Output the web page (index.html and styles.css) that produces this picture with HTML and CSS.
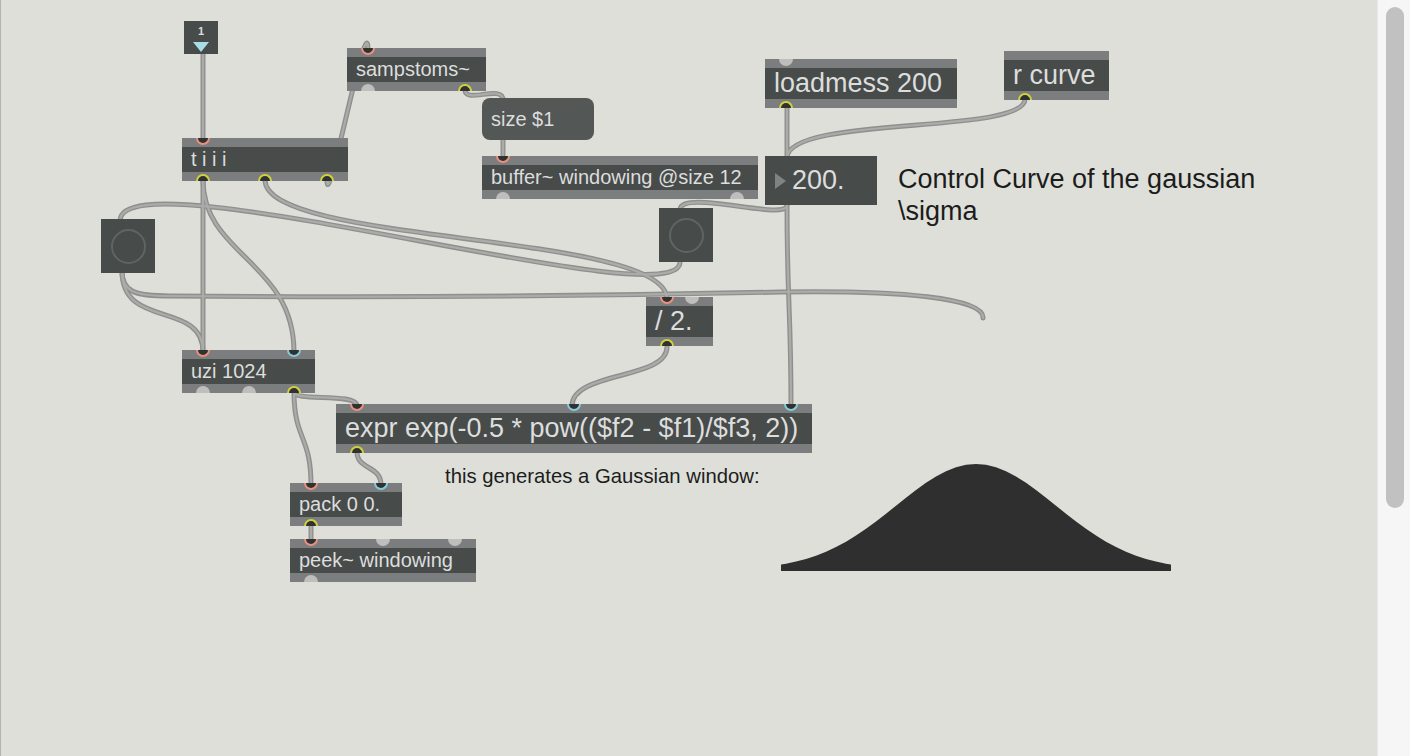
FILE: index.html
```html
<!DOCTYPE html>
<html lang="en">

<head>
    <meta charset="UTF-8">
    <title>gaussian window</title>
    <link rel="stylesheet" href="styles.css">
</head>

<body>
    <div class="patcher">

        <!-- patch cords, drawn under the boxes -->
        <svg class="cords" width="1377" height="756" viewBox="0 0 1377 756">
            <defs>
                <g id="cordset">
                    <path d="M203,54 L203,140" />
                    <path d="M327,180 C327,218 368,2 368,50" />
                    <path d="M465,90 C465,104 503,84 503,100" />
                    <path d="M503,140 L503,158" />
                    <path d="M787,107 L787,160" />
                    <path d="M787,205 C787,300 791,310 791,406" />
                    <path d="M1025,99 C1025,135 787,115 787,158" />
                    <path d="M787,205 C787,222 680,188 680,210" />
                    <path d="M680,262 C680,320 120,152 120,221" />
                    <path d="M265,180 C265,245 667,232 667,299" />
                    <path d="M667,347 C667,380 572,371 572,406" />
                    <path d="M203,180 L203,352" />
                    <path d="M203,180 C203,255 294,262 294,352" />
                    <path d="M122,271 C122,330 203,300 203,352" />
                    <path d="M122,271 C122,292 135,296 170,296 C400,298 600,296 780,292 C900,290 985,298 983,318" />
                    <path d="M294,392 C294,402 357,392 357,406" />
                    <path d="M294,392 C294,440 311,435 311,485" />
                    <path d="M357,452 C357,470 381,465 381,485" />
                    <path d="M311,524 L311,541" />
                </g>
            </defs>
            <use href="#cordset" class="cord-edge" />
            <use href="#cordset" class="cord-core" />
        </svg>

        <div class="numbox n-one">
            <span class="numbox-val">1</span>
            <span class="numbox-arrow"></span>
        </div>

        <div class="obj sm n-trig">
            <div class="obj-text">t i i i</div>
            <span class="port in hot p-l"></span>
            <span class="port out hot p-l"></span>
            <span class="port out hot p-m"></span>
            <span class="port out hot p-r"></span>
        </div>

        <div class="obj sm n-samps">
            <div class="obj-text">sampstoms~</div>
            <span class="port in hot p-l"></span>
            <span class="port out idle p-l"></span>
            <span class="port out hot p-r"></span>
        </div>

        <div class="msg n-size">size $1</div>

        <div class="obj sm n-buffer">
            <div class="obj-text">buffer~ windowing @size 12</div>
            <span class="port in hot p-l"></span>
            <span class="port out idle p-l"></span>
            <span class="port out idle p-r"></span>
        </div>

        <div class="obj lg n-loadmess">
            <div class="obj-text">loadmess 200</div>
            <span class="port in idle p-l"></span>
            <span class="port out hot p-l"></span>
        </div>

        <div class="obj lg n-rcurve">
            <div class="obj-text">r curve</div>
            <span class="port out hot p-l"></span>
        </div>

        <div class="flonum n-number">
            <span class="flonum-arrow"></span>
            <span>200.</span>
        </div>

        <div class="comment lg-text n-sigma">Control Curve of the gaussian<br>\sigma</div>

        <div class="bang n-bang1"><span class="bang-ring"></span></div>
        <div class="bang n-bang2"><span class="bang-ring"></span></div>

        <div class="obj lg n-div">
            <div class="obj-text">/ 2.</div>
            <span class="port in hot p-l"></span>
            <span class="port in idle p-r"></span>
            <span class="port out hot p-l"></span>
        </div>

        <div class="obj sm n-uzi">
            <div class="obj-text">uzi 1024</div>
            <span class="port in hot p-l"></span>
            <span class="port in hot cold p-r"></span>
            <span class="port out idle p-l"></span>
            <span class="port out idle p-m"></span>
            <span class="port out hot p-r"></span>
        </div>

        <div class="obj lg n-expr">
            <div class="obj-text">expr exp(-0.5 * pow(($f2 - $f1)/$f3, 2))</div>
            <span class="port in hot p-l"></span>
            <span class="port in hot cold p-m"></span>
            <span class="port in hot cold p-r"></span>
            <span class="port out hot p-l"></span>
        </div>

        <div class="comment n-gauss">this generates a Gaussian window:</div>

        <div class="obj sm n-pack">
            <div class="obj-text">pack 0 0.</div>
            <span class="port in hot p-l"></span>
            <span class="port in hot cold p-r"></span>
            <span class="port out hot p-l"></span>
        </div>

        <div class="obj sm n-peek">
            <div class="obj-text">peek~ windowing</div>
            <span class="port in hot p-l"></span>
            <span class="port in idle p-m"></span>
            <span class="port in idle p-r"></span>
            <span class="port out idle p-l"></span>
        </div>

        <!-- plot of the window that expr writes into the buffer -->
        <svg class="plot" width="396" height="114" viewBox="778 460 396 114">
            <polygon points="781,571 781,564.6 786,563.7 796,561.6 806,558.9 816,555.7 826,551.7 836,547.1 846,541.7 856,535.6 866,528.8 876,521.5 886,513.7 896,505.7 906,497.7 916,490 926,482.8 936,476.5 946,471.2 956,467.3 966,464.8 976,464 986,464.8 996,467.3 1006,471.2 1016,476.5 1026,482.8 1036,490 1046,497.7 1056,505.7 1066,513.7 1076,521.5 1086,528.8 1096,535.6 1106,541.7 1116,547.1 1126,551.7 1136,555.7 1146,558.9 1156,561.6 1166,563.7 1171,564.6 1171,571" />
        </svg>
    </div>

    <div class="scrollbar">
        <div class="scroll-thumb"></div>
    </div>
</body>

</html>
```

FILE: styles.css
```css
:root {
    --canvas: #dedfd9;
    --box-dark: #474b4a;
    --box-strip: #7b7d7e;
    --box-text: #dcdddd;
    --cord-edge: #8f908d;
    --cord-core: #abacaa;
}

* {
    box-sizing: border-box;
    margin: 0;
    padding: 0;
}

body {
    font-family: 'Liberation Sans', Arial, sans-serif;
    display: flex;
    width: 1410px;
    height: 756px;
    overflow: hidden;
    background-color: var(--canvas);
}

.patcher {
    position: relative;
    flex: 1;
    height: 100%;
    background-color: var(--canvas);
    box-shadow: inset 1px 0 #b3b4b1;
}

/* cords */
.cords {
    position: absolute;
    left: 0;
    top: 0;
}

.cord-edge {
    fill: none;
    stroke: var(--cord-edge);
    stroke-width: 5;
    stroke-linecap: round;
}

.cord-core {
    fill: none;
    stroke: var(--cord-core);
    stroke-width: 2.2;
    stroke-linecap: round;
}

/* object boxes */
.obj {
    position: absolute;
    background-color: var(--box-strip);
    padding: 9px 0;
}

.obj-text {
    background-color: var(--box-dark);
    color: var(--box-text);
    padding-left: 9px;
    white-space: nowrap;
}

.obj.sm .obj-text {
    height: 25px;
    line-height: 25px;
    font-size: 20px;
}

.obj.lg .obj-text {
    height: 31px;
    line-height: 31px;
    font-size: 27px;
}

.port {
    position: absolute;
    width: 14px;
    height: 7px;
}

.port.in {
    top: 0;
    border-radius: 0 0 7px 7px;
}

.port.out {
    bottom: 0;
    border-radius: 7px 7px 0 0;
}

.port.idle {
    background-color: #bebebc;
}

.port.hot {
    background-color: #2f3231;
    border: 2px solid #e8917f;
}

.port.in.hot {
    border-top: none;
}

.port.out.hot {
    border-bottom: none;
    border-color: #d2d23c;
}

.port.in.cold {
    border-color: #84cadb;
}

.p-l {
    left: 14px;
}

.p-r {
    right: 14px;
}

.p-m {
    left: 50%;
    margin-left: -7px;
}

/* the little "1" number box with arrow */
.numbox {
    position: absolute;
    width: 34px;
    height: 33px;
    background-color: var(--box-dark);
    display: flex;
    flex-direction: column;
    align-items: center;
    padding-top: 5px;
}

.numbox-val {
    color: var(--box-text);
    font-size: 11px;
    font-weight: bold;
    line-height: 11px;
}

.numbox-arrow {
    margin-top: 5px;
    border-top: 10px solid #a8dde7;
    border-left: 8px solid transparent;
    border-right: 8px solid transparent;
}

/* message box */
.msg {
    position: absolute;
    height: 42px;
    line-height: 42px;
    padding-left: 9px;
    border-radius: 8px;
    background-color: #535756;
    color: var(--box-text);
    font-size: 20px;
    white-space: nowrap;
}

/* float number box */
.flonum {
    position: absolute;
    height: 49px;
    display: flex;
    align-items: center;
    gap: 6px;
    padding-left: 10px;
    background-color: var(--box-dark);
    color: var(--box-text);
    font-size: 27px;
}

.flonum-arrow {
    border-left: 11px solid #808383;
    border-top: 8px solid transparent;
    border-bottom: 8px solid transparent;
}

/* bangs */
.bang {
    position: absolute;
    width: 54px;
    height: 54px;
    background-color: var(--box-dark);
    display: flex;
    align-items: center;
    justify-content: center;
}

.bang-ring {
    width: 35px;
    height: 35px;
    border: 2px solid #606464;
    border-radius: 50%;
}

/* comments */
.comment {
    position: absolute;
    color: #1c1c1c;
    font-size: 20px;
    line-height: 24px;
    white-space: nowrap;
}

.comment.lg-text {
    font-size: 27px;
    line-height: 32px;
}

.n-gauss {
    font-size: 20.3px;
}

.plot {
    position: absolute;
    left: 778px;
    top: 460px;
}

.plot polygon {
    fill: #2f2f2f;
}

/* box placement on the canvas */
.n-one { left: 184px; top: 21px; }
.n-trig { left: 182px; top: 138px; width: 166px; }
.n-samps { left: 347px; top: 48px; width: 139px; }
.n-size { left: 482px; top: 98px; width: 112px; }
.n-buffer { left: 482px; top: 156px; width: 276px; }
.n-loadmess { left: 765px; top: 59px; width: 192px; }
.n-rcurve { left: 1004px; top: 51px; width: 105px; }
.n-number { left: 765px; top: 156px; width: 112px; }
.n-sigma { left: 898px; top: 163px; }
.n-bang1 { left: 101px; top: 219px; }
.n-bang2 { left: 659px; top: 208px; }
.n-div { left: 646px; top: 297px; width: 67px; }
.n-uzi { left: 182px; top: 350px; width: 133px; }
.n-expr { left: 336px; top: 404px; width: 476px; }
.n-gauss { left: 445px; top: 464px; }
.n-pack { left: 290px; top: 483px; width: 112px; }
.n-peek { left: 290px; top: 539px; width: 186px; }

/* right scrollbar */
.scrollbar {
    width: 33px;
    height: 100%;
    background-color: #f6f6f6;
    box-shadow: inset 1px 0 #e9e9e9;
    padding: 7px 6px 0 9px;
}

.scroll-thumb {
    height: 501px;
    border-radius: 9px;
    background-color: #c1c1c1;
}
```
